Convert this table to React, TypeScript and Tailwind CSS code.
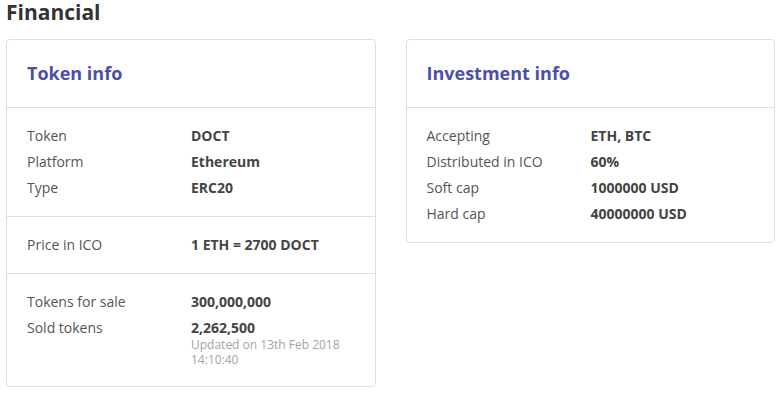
import React from "react";

type Row = { label: string; value: string; note?: string[] };

function Section({ rows, last, pb }: { rows: Row[]; last?: boolean; pb: string }) {
  return (
    <div className={`px-[20px] pt-[15px] ${pb} ${last ? "" : "border-b border-[#dedede]"}`}>
      {rows.map((r) => (
        <div key={r.label} className="flex text-[14px] leading-[26px]">
          <div className="w-[164px] shrink-0 text-[#555]">{r.label}</div>
          {r.note ? (
            <div className="flex flex-col">
              <div className="font-bold text-[#444] leading-[19px] pt-[3px]">{r.value}</div>
              <div className="text-[12px] leading-[15px] text-[#a3a3a3]">
                {r.note.map((n) => (
                  <div key={n}>{n}</div>
                ))}
              </div>
            </div>
          ) : (
            <div className="font-bold text-[#444]">{r.value}</div>
          )}
        </div>
      ))}
    </div>
  );
}

function Card({ title, sections }: { title: string; sections: { rows: Row[]; pb: string }[] }) {
  return (
    <div className="w-[370px] border border-[#dedede] rounded-[4px] bg-white">
      <div className="h-[68px] flex items-center px-[20px] border-b border-[#dedede]">
        <h2 className="text-[18px] font-bold text-[#4b50a8]">{title}</h2>
      </div>
      {sections.map((s, i) => (
        <Section key={i} rows={s.rows} pb={s.pb} last={i === sections.length - 1} />
      ))}
    </div>
  );
}

export default function App() {
  return (
    <div className="w-[781px] h-[394px] bg-white px-[6px]" style={{ fontFamily: '"Open Sans", sans-serif' }}>
      <h1 className="text-[21px] font-bold leading-[24px] text-[#333] mb-[15px]">Financial</h1>
      <div className="flex items-start gap-[30px]">
        <Card
          title="Token info"
          sections={[
            {
              pb: "pb-[15px]",
              rows: [
                { label: "Token", value: "DOCT" },
                { label: "Platform", value: "Ethereum" },
                { label: "Type", value: "ERC20" },
              ],
            },
            { pb: "pb-[15px]", rows: [{ label: "Price in ICO", value: "1 ETH = 2700 DOCT" }] },
            {
              pb: "pb-[19px]",
              rows: [
                { label: "Tokens for sale", value: "300,000,000" },
                {
                  label: "Sold tokens",
                  value: "2,262,500",
                  note: ["Updated on 13th Feb 2018", "14:10:40"],
                },
              ],
            },
          ]}
        />
        <Card
          title="Investment info"
          sections={[
            {
              pb: "pb-[15px]",
              rows: [
                { label: "Accepting", value: "ETH, BTC" },
                { label: "Distributed in ICO", value: "60%" },
                { label: "Soft cap", value: "1000000 USD" },
                { label: "Hard cap", value: "40000000 USD" },
              ],
            },
          ]}
        />
      </div>
    </div>
  );
}
